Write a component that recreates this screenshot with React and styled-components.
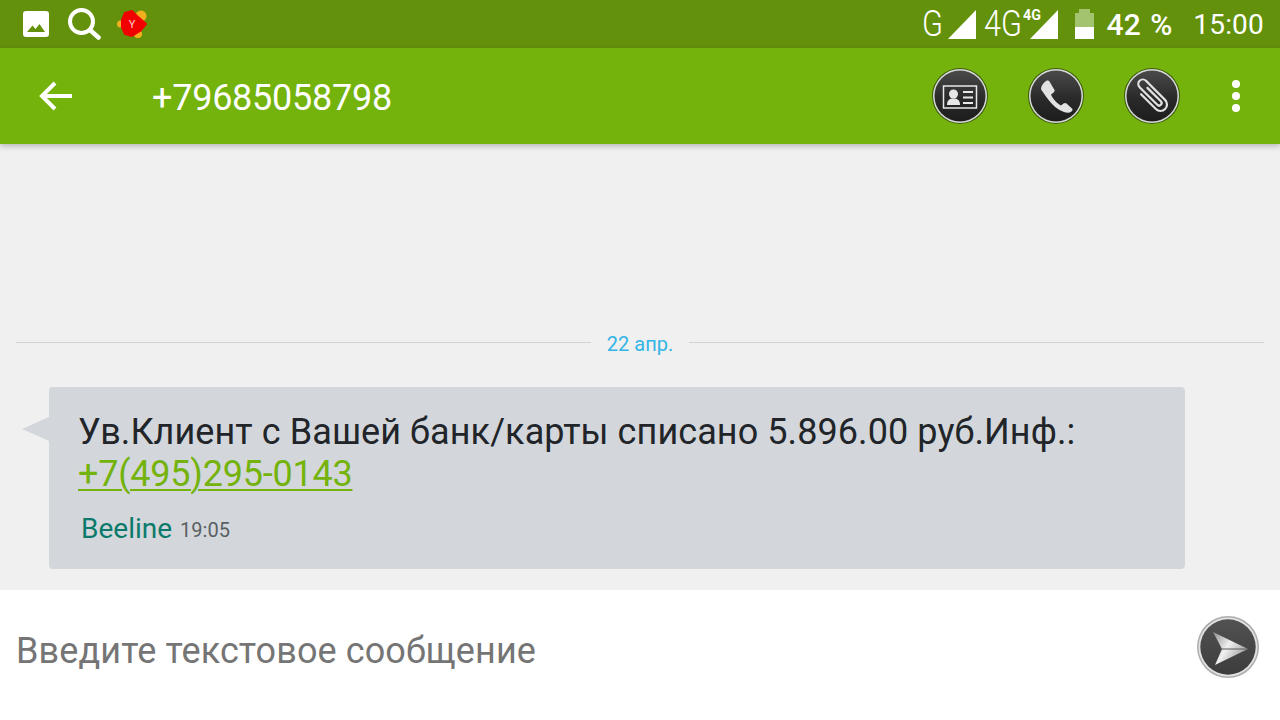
import React from "react";
import styled, { createGlobalStyle } from "styled-components";

const GlobalStyle = createGlobalStyle`
  html, body {
    margin: 0;
    padding: 0;
    background: #f0f0f0;
  }
`;

const Screen = styled.div`
  width: 1280px;
  height: 720px;
  display: flex;
  flex-direction: column;
  overflow: hidden;
  font-family: Roboto, "Liberation Sans", sans-serif;
  background: #f0f0f0;
`;

const StatusBar = styled.div`
  height: 48px;
  flex: none;
  display: flex;
  align-items: center;
  justify-content: space-between;
  padding: 0 16px 0 23px;
  background: #64910c;
  color: #fff;
`;

const StatusGroup = styled.div`
  display: flex;
  align-items: center;
`;

const NetLabel = styled.span`
  font-size: 36px;
  font-weight: 300;
  line-height: 48px;
  transform: scaleX(0.85);
  transform-origin: left center;
  width: ${(p) => p.$w}px;
  margin-left: ${(p) => p.$ml || 0}px;
`;

const Tiny = styled.span`
  font-size: 15px;
  font-weight: 700;
  line-height: 13px;
  align-self: flex-start;
  margin: 9px 0 0 1px;
  width: 18px;
  transform: scaleX(0.95);
  transform-origin: left center;
`;

const Percent = styled.span`
  font-size: 30px;
  font-weight: 500;
  word-spacing: 2px;
  margin-left: 13px;
`;

const Clock = styled.span`
  font-size: 28px;
  letter-spacing: 0.2px;
  margin-left: 21px;
`;

const AppBar = styled.header`
  height: 96px;
  flex: none;
  display: flex;
  align-items: center;
  padding: 0 40px 0 38px;
  background: #74b20c;
  box-shadow: 0 2px 6px rgba(0, 0, 0, 0.25);
  position: relative;
  color: #fff;
`;

const Title = styled.h1`
  margin: 0 0 0 78px;
  padding-top: 3px;
  flex: 1;
  font-size: 36px;
  font-weight: 400;
  letter-spacing: -0.25px;
`;

const RoundIcon = styled.div`
  width: 56px;
  height: 56px;
  margin-left: 40px;
  flex: none;
  &:first-of-type {
    margin-left: 0;
  }
`;

const Dots = styled.div`
  display: flex;
  flex-direction: column;
  gap: 4px;
  margin-left: 52px;
  & > i {
    width: 8px;
    height: 8px;
    border-radius: 50%;
    background: #fff;
  }
`;

const Thread = styled.main`
  flex: 1;
  display: flex;
  flex-direction: column;
  justify-content: flex-end;
  padding: 0 16px 21px;
`;

const DateRow = styled.div`
  display: flex;
  align-items: center;
  gap: 16px;
  margin-bottom: 31px;
  color: #33b5e5;
  font-size: 20px;
  &::before,
  &::after {
    content: "";
    flex: 1;
    height: 1px;
    margin-bottom: 3px;
    background: #d2d2d2;
  }
`;

const Bubble = styled.div`
  position: relative;
  width: 1136px;
  height: 182px;
  margin-left: 33px;
  box-sizing: border-box;
  padding: 24px 29px 0;
  border-radius: 4px;
  background: #d3d7db;
  &::before {
    content: "";
    position: absolute;
    left: -27px;
    top: 30px;
    border-style: solid;
    border-width: 12px 27px 12px 0;
    border-color: transparent #d3d7db transparent transparent;
  }
`;

const MessageText = styled.div`
  font-size: 36px;
  line-height: 42px;
  letter-spacing: 0.08px;
  color: #212529;
`;

const PhoneLink = styled.a`
  color: #74b20c;
  letter-spacing: -0.22px;
  text-decoration: underline;
  text-decoration-thickness: 2px;
  text-underline-offset: 3px;
`;

const Meta = styled.div`
  display: flex;
  align-items: baseline;
  gap: 8px;
  margin: 17px 0 0 3px;
`;

const Sender = styled.span`
  font-size: 28px;
  color: #0c7a6b;
`;

const Time = styled.span`
  font-size: 20px;
  color: #5a5f63;
  transform: translateY(-1px);
`;

const Composer = styled.div`
  height: 130px;
  flex: none;
  display: flex;
  align-items: center;
  justify-content: space-between;
  padding: 0 21px 8px 16px;
  box-sizing: border-box;
  background: #fff;
  font-size: 36px;
  letter-spacing: 0.11px;
  color: #757575;
`;

const SendIcon = styled.div`
  width: 62px;
  height: 62px;
  align-self: flex-start;
  margin-top: 26px;
`;

function ImageIcon() {
  return (
    <svg width="26" height="26" viewBox="0 0 26 26">
      <path
        fill="#fff"
        fillRule="evenodd"
        d="M3 0h20a3 3 0 0 1 3 3v20a3 3 0 0 1-3 3H3a3 3 0 0 1-3-3V3a3 3 0 0 1 3-3zM4 21h18l-5.500-8-4 5-3-3.500z"
      />
    </svg>
  );
}

function SearchIcon() {
  return (
    <svg width="33" height="32" viewBox="0 0 33 32" style={{ marginLeft: 19 }}>
      <circle cx="13.500" cy="13.500" r="11.500" fill="none" stroke="#fff" strokeWidth="4" />
      <path d="M22 22l8.500 7.500" stroke="#fff" strokeWidth="4.500" strokeLinecap="round" />
    </svg>
  );
}

function YandexIcon() {
  return (
    <svg width="30" height="28" viewBox="0 0 30 28" style={{ marginLeft: 16 }}>
      <circle cx="3.500" cy="14" r="3.500" fill="#f2b01e" />
      <circle cx="24" cy="6" r="5.500" fill="#f2b01e" />
      <circle cx="21" cy="24" r="4" fill="#f2b01e" />
      <path
        fill="#f20000"
        stroke="#f20000"
        strokeWidth="2"
        strokeLinejoin="round"
        d="M5 10l3-7 7-2 5 5 9 8-6 7-8 5-7-2-3-7z"
      />
      <text x="15" y="18" fontSize="11" fill="#ffd0d0" textAnchor="middle" fontFamily="Roboto, sans-serif">
        Y
      </text>
    </svg>
  );
}

function Signal({ ml }) {
  return (
    <svg width="28" height="29" viewBox="0 0 28 29" style={{ marginLeft: ml }}>
      <path d="M0 29L28 0v29z" fill="#fff" />
    </svg>
  );
}

function Battery() {
  return (
    <svg width="19" height="30" viewBox="0 0 19 30" style={{ marginLeft: 17 }}>
      <path d="M4 0h11v4h4v26H0V4h4z" fill="#a3c36e" />
      <path d="M0 18h19v12H0z" fill="#fff" />
    </svg>
  );
}

function Badge({ id, children }) {
  return (
    <svg width="56" height="56" viewBox="0 0 56 56">
      <defs>
        <linearGradient id={id} x1="0" y1="0" x2="0" y2="1">
          <stop offset="0" stopColor="#4a4a4a" />
          <stop offset="0.55" stopColor="#2a2a2a" />
          <stop offset="1" stopColor="#1d1d1d" />
        </linearGradient>
      </defs>
      <circle cx="28" cy="28" r="28" fill="#3f5a14" />
      <circle cx="28" cy="28" r="27" fill="#d8dcd4" />
      <circle cx="28" cy="28" r="25.500" fill={`url(#${id})`} />
      {children}
    </svg>
  );
}

function ContactBadge() {
  return (
    <Badge id="contact">
      <rect x="11.500" y="18" width="33" height="22" fill="none" stroke="#e8e8e8" strokeWidth="1.500" />
      <circle cx="21.500" cy="26" r="4.500" fill="#e8e8e8" />
      <path d="M15 37c0-5 2.500-6.500 6.500-6.500s6.500 1.500 6.500 6.500z" fill="#e8e8e8" />
      <path d="M31 24h10M31 29.500h10M31 35h10" stroke="#e8e8e8" strokeWidth="2" />
    </Badge>
  );
}

function PhoneBadge() {
  return (
    <Badge id="phone">
      <path
        fill="#e2e2e2"
        d="M13 21c0-3 2-6 5-8 1.500-.7 3-.5 3.500.5l5 8.500c.5 1-.2 2-1.500 3l-2 1.500c1.500 4 5.500 8.500 10 11l2.500-2c1-.8 2.200-.8 3 0l5.500 5c1 1 .5 2-.5 3-2 1.500-4.500 1.500-7.500.5-6-2-12-7-16.500-13.500-3.500-5-6.500-9-6.500-9.500z"
      />
    </Badge>
  );
}

function ClipBadge() {
  return (
    <Badge id="clip">
      <path
        transform="rotate(-45 28 28)"
        fill="none"
        stroke="#e2e2e2"
        strokeWidth="2.200"
        strokeLinecap="round"
        d="M21.500 19V40a6.500 6.500 0 0 0 13 0V13a4.500 4.500 0 0 0-9 0V38a2.500 2.500 0 0 0 5 0V19"
      />
    </Badge>
  );
}

function SendBadge() {
  return (
    <svg width="62" height="62" viewBox="0 0 62 62">
      <defs>
        <linearGradient id="arrow" x1="0" y1="0" x2="1" y2="0.6">
          <stop offset="0" stopColor="#8d8d8d" />
          <stop offset="0.5" stopColor="#f0f0f0" />
          <stop offset="1" stopColor="#9a9a9a" />
        </linearGradient>
        <linearGradient id="sendFace" x1="0" y1="0" x2="0" y2="1">
          <stop offset="0" stopColor="#525252" />
          <stop offset="1" stopColor="#3c3c3c" />
        </linearGradient>
      </defs>
      <circle cx="31" cy="31" r="31" fill="#adadad" />
      <circle cx="31" cy="31" r="29.500" fill="#e2e2e2" />
      <circle cx="31" cy="31" r="27.700" fill="url(#sendFace)" />
      <path d="M16 16l35 17-33 16 7-16z" fill="url(#arrow)" />
      <path d="M25 33h26" stroke="#5a5a5a" strokeWidth="1" />
    </svg>
  );
}

export default function App() {
  return (
    <Screen>
      <GlobalStyle />
      <StatusBar>
        <StatusGroup>
          <ImageIcon />
          <SearchIcon />
          <YandexIcon />
        </StatusGroup>
        <StatusGroup>
          <NetLabel $w={26}>G</NetLabel>
          <Signal ml={0} />
          <NetLabel $w={38} $ml={8}>
            4G
          </NetLabel>
          <Tiny>4G</Tiny>
          <Signal ml={-11} />
          <Battery />
          <Percent>42 %</Percent>
          <Clock>15:00</Clock>
        </StatusGroup>
      </StatusBar>
      <AppBar>
        <svg width="36" height="32" viewBox="0 0 36 32">
          <path d="M34 16H4M17 3L4 16l13 13" fill="none" stroke="#fff" strokeWidth="4" />
        </svg>
        <Title>+79685058798</Title>
        <RoundIcon>
          <ContactBadge />
        </RoundIcon>
        <RoundIcon>
          <PhoneBadge />
        </RoundIcon>
        <RoundIcon>
          <ClipBadge />
        </RoundIcon>
        <Dots>
          <i />
          <i />
          <i />
        </Dots>
      </AppBar>
      <Thread>
        <DateRow>22 апр.</DateRow>
        <Bubble>
          <MessageText>
            Ув.Клиент с Вашей банк/карты списано 5.896.00 руб.Инф.:
            <br />
            <PhoneLink>+7(495)295-0143</PhoneLink>
          </MessageText>
          <Meta>
            <Sender>Beeline</Sender>
            <Time>19:05</Time>
          </Meta>
        </Bubble>
      </Thread>
      <Composer>
        Введите текстовое сообщение
        <SendIcon>
          <SendBadge />
        </SendIcon>
      </Composer>
    </Screen>
  );
}
